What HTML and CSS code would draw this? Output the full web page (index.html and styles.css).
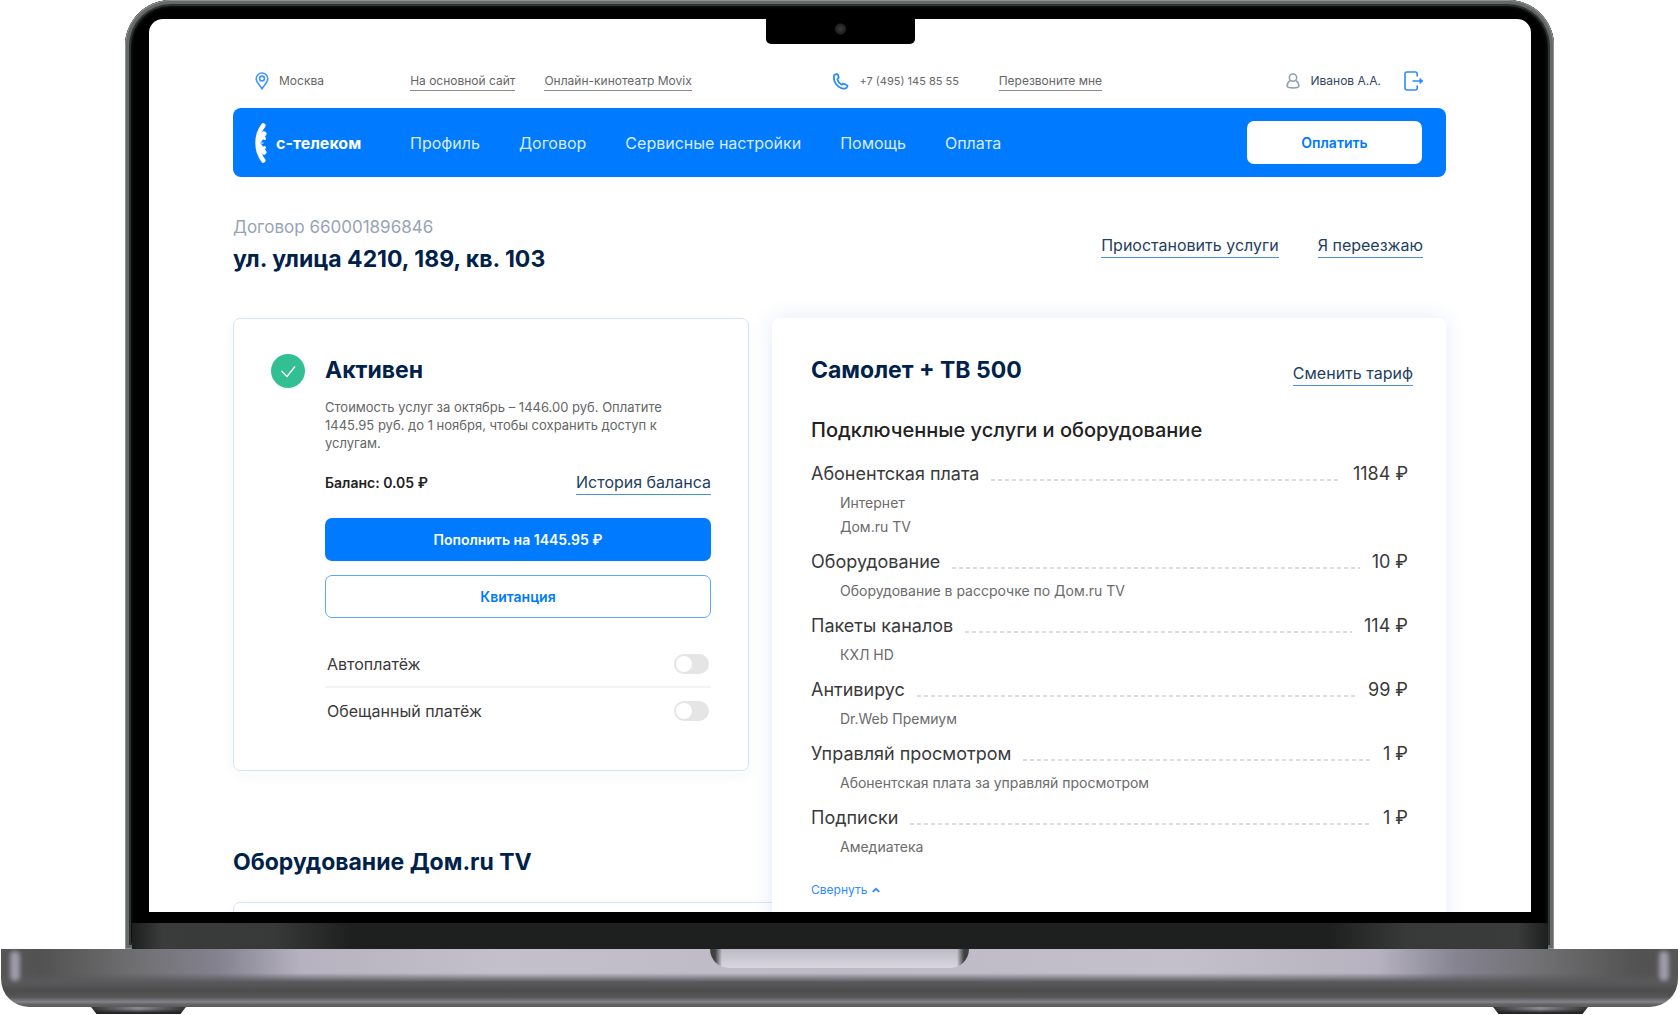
FILE: index.html
```html
<!DOCTYPE html>
<html lang="ru">
<head>
<meta charset="utf-8">
<meta name="viewport" content="width=device-width, initial-scale=1">
<title>С-Телеком — личный кабинет</title>
<link rel="stylesheet" href="styles.css">
</head>
<body>
<div class="laptop">
  <div class="lid">
    <div class="notch"></div>
    <div class="screen">
      <div class="container">
        <header>
          <div class="topbar">
            <div class="topbar-group city">
              <svg width="14" height="18" viewBox="0 0 14 18" fill="none" stroke="#3d96ff" stroke-width="1.6"><path d="M7 16.8C5 13.6 1.2 10.4 1.2 6.8a5.8 5.8 0 0 1 11.6 0C12.800 10.400 9 13.600 7 16.800Z"/><circle cx="7" cy="6.500" r="2.400"/></svg>
              <span>Москва</span>
            </div>
            <div class="topbar-group sites">
              <a class="link-small" href="#">На основной сайт</a>
              <a class="link-small" href="#">Онлайн-кинотеатр Movix</a>
            </div>
            <div class="topbar-group phone">
              <svg width="16" height="17" viewBox="0 0 16 17" fill="none" stroke="#2b8cff" stroke-width="1.800" stroke-linejoin="round"><path d="M1.800 1.600 3.800 1.100Q4.700 1 5 1.900L5.700 4.300Q5.800 5 5.200 5.500L4.300 6.300Q5.300 9.600 8.600 11.700L9.700 10.900Q10.400 10.500 11.100 10.900L13.900 12.200Q14.700 12.700 14.400 13.500 13.700 15.500 11.700 15.600 6.800 15.800 3.200 11.200 0 6.700 1.100 2.500 1.300 1.800 1.800 1.600Z"/></svg>
              <span>+7 (495) 145 85 55</span>
            </div>
            <div class="topbar-group"><a class="link-small" href="#">Перезвоните мне</a></div>
            <div class="topbar-group user">
              <svg width="14" height="16" viewBox="0 0 14 16" fill="none" stroke="#919eae" stroke-width="1.500"><circle cx="7" cy="4.600" r="3.700"/><path d="M4.300 7.300C2.300 8.500 1.200 10.400 1.100 13q0 1.900 5.900 1.900t5.900-1.900C12.800 10.400 11.700 8.500 9.700 7.300"/></svg>
              <span>Иванов А.А.</span>
              <a class="exit" href="#" aria-label="Выйти"><svg width="20" height="20" viewBox="0 0 20 20" fill="none" stroke="#2b8cff" stroke-width="1.600"><path d="M13.200 5.500V3q0-2-2-2H3Q1 1 1 3v14q0 2 2 2h8.200q2 0 2-2v-2.500M8.500 10H16"/><path d="M15.800 7.200 19.200 10l-3.400 2.800Z" fill="#2b8cff" stroke-width=".5"/></svg></a>
            </div>
          </div>
          <nav class="navbar">
            <a class="logo" href="#">
              <svg width="12" height="40" viewBox="0 0 12 40" fill="none" stroke="#fff" stroke-linecap="round"><path d="M8.300 2.500Q2.500 10 2.500 20t5.800 17.500" stroke-width="4.500"/><path d="M4.500 17 9 10.800M4.500 23 9 29.200" stroke-width="5"/><path d="M5 13l4.500 2.500M5 27l4.500-2.500" stroke-width="3"/><path d="M3 20h5" stroke-width="1.200"/></svg>
              <span>с-телеком</span>
            </a>
            <div class="menu">
              <a href="#">Профиль</a>
              <a href="#">Договор</a>
              <a href="#">Сервисные настройки</a>
              <a href="#">Помощь</a>
              <a href="#">Оплата</a>
            </div>
            <button class="btn btn-pay" type="button">Оплатить</button>
          </nav>
        </header>

        <div class="page-head">
          <div>
            <p class="contract">Договор 660001896846</p>
            <h1>ул. улица 4210, 189, кв. 103</h1>
          </div>
          <div class="page-links">
            <a class="link" href="#">Приостановить услуги</a>
            <a class="link" href="#">Я переезжаю</a>
          </div>
        </div>

        <main class="columns">
          <div class="column-left">
            <section class="card status">
              <svg class="status-icon" width="34" height="34" viewBox="0 0 34 34" fill="none"><circle cx="17" cy="17" r="17" fill="#32bf91"/><path d="m10.500 17 5.500 5.500 8-10" stroke="#fff" stroke-width="1.400"/></svg>
              <div class="status-body">
                <h2>Активен</h2>
                <p class="note">Стоимость услуг за октябрь – 1446.00 руб. Оплатите 1445.95 руб. до 1 ноября, чтобы сохранить доступ к услугам.</p>
                <div class="balance">
                  <strong>Баланс: 0.05 ₽</strong>
                  <a class="link" href="#">История баланса</a>
                </div>
                <div class="actions">
                  <button class="btn btn-primary" type="button">Пополнить на 1445.95 ₽</button>
                  <button class="btn btn-outline" type="button">Квитанция</button>
                </div>
                <div class="toggles">
                  <div class="toggle-row"><label for="auto">Автоплатёж</label><input class="toggle" type="checkbox" id="auto"></div>
                  <div class="toggle-row"><label for="promised">Обещанный платёж</label><input class="toggle" type="checkbox" id="promised"></div>
                </div>
              </div>
            </section>
            <section class="equipment">
              <h2>Оборудование Дом.ru TV</h2>
              <div class="card equipment-card"></div>
            </section>
          </div>

          <section class="tariff">
            <div class="tariff-head">
              <h2>Самолет + ТВ 500</h2>
              <a class="link" href="#">Сменить тариф</a>
            </div>
            <h3>Подключенные услуги и оборудование</h3>
            <ul class="services">
              <li>
                <div class="service"><span>Абонентская плата</span><i class="dots"></i><span>1184 ₽</span></div>
                <p>Интернет</p>
                <p>Дом.ru TV</p>
              </li>
              <li>
                <div class="service"><span>Оборудование</span><i class="dots"></i><span>10 ₽</span></div>
                <p>Оборудование в рассрочке по Дом.ru TV</p>
              </li>
              <li>
                <div class="service"><span>Пакеты каналов</span><i class="dots"></i><span>114 ₽</span></div>
                <p>КХЛ HD</p>
              </li>
              <li>
                <div class="service"><span>Антивирус</span><i class="dots"></i><span>99 ₽</span></div>
                <p>Dr.Web Премиум</p>
              </li>
              <li>
                <div class="service"><span>Управляй просмотром</span><i class="dots"></i><span>1 ₽</span></div>
                <p>Абонентская плата за управляй просмотром</p>
              </li>
              <li>
                <div class="service"><span>Подписки</span><i class="dots"></i><span>1 ₽</span></div>
                <p>Амедиатека</p>
              </li>
            </ul>
            <button class="collapse" type="button">Свернуть <svg width="8" height="6" viewBox="0 0 8 6" fill="none" stroke="#2b8cff" stroke-width="1.800"><path d="m.7 4.800 3.300-3 3.300 3"/></svg></button>
          </section>
        </main>
      </div>
    </div>
    <div class="hinge"></div>
  </div>
  <div class="base"><div class="groove"></div></div>
  <div class="feet"><span></span><span></span></div>
</div>
</body>
</html>
```
FILE: styles.css
```css
* { box-sizing: border-box; }

body {
  margin: 0;
  background: #fff;
  color: #3a3a3a;
  font-family: Inter, "Noto Sans", sans-serif;
  font-size: 16px;
}

h1, h2, h3, p, ul { margin: 0; padding: 0; }
a { color: inherit; text-decoration: none; }
button { font-family: inherit; cursor: pointer; }
svg { display: block; flex: none; }

/* Laptop frame */
.laptop {
  display: flex;
  flex-direction: column;
  height: 100vh;
  overflow: hidden;
}

.lid {
  position: relative;
  flex: 1;
  min-height: 0;
  display: flex;
  flex-direction: column;
  margin: 0 126px 0 125px;
  padding: 19px 23px 0 24px;
  background: #000;
  border-radius: 46px 46px 0 0;
  box-shadow: inset 0 0 0 1px #8f9391, inset 0 0 0 4px #66696a, inset 0 0 0 6px #303232, inset 0 0 3px 7px #161818;
}

.notch {
  position: absolute;
  z-index: 2;
  top: 12px;
  left: 50%;
  width: 149px;
  height: 32px;
  margin-left: -74px;
  border-radius: 0 0 5px 5px;
  background: radial-gradient(circle at 50% 17px, #3a3c3c 0, #242626 4px, #222 5px, #000 6px);
}

.screen {
  flex: 1;
  min-height: 0;
  overflow: hidden;
  background: #fff;
  border-radius: 14px 14px 0 0;
}

.hinge {
  flex: none;
  height: 26px;
  margin: 11px -17px 0;
  background: linear-gradient(90deg, #1d1f1e 0, #3a3c3b 30px, #383a39 140px, #1e201f 220px, #1e201f calc(100% - 220px), #383a39 calc(100% - 140px), #3a3c3b calc(100% - 30px), #1d1f1e 100%);
}

.base {
  position: relative;
  flex: none;
  display: flex;
  justify-content: center;
  height: 58px;
  margin: 0 2px 0 1px;
  border-radius: 0 0 28px 28px;
  background:
    linear-gradient(180deg, rgba(90, 90, 94, 0) 24px, #59595c 33px, #4d4d4d 42px, #555 48px, #85828c 53px, #666 55px, #5a5a5a 58px),
    linear-gradient(90deg, #555 0, #525252 40px, #6e6e70 130px, #858390 220px, #b6b2bf 300px, #c3c0cb 500px, #bdbac6 50%, #c3c0cb calc(100% - 500px), #b6b2bf calc(100% - 300px), #858390 calc(100% - 220px), #6e6e70 calc(100% - 130px), #525252 calc(100% - 40px), #555 100%);
}

.base::before,
.base::after {
  content: "";
  position: absolute;
  top: 2px;
  width: 10px;
  height: 30px;
  border-radius: 5px;
  background: #9e9aa8;
  filter: blur(2px);
}
.base::before { left: 9px; }
.base::after { right: 9px; }

.groove {
  width: 259px;
  height: 19px;
  border-radius: 0 0 22px 22px;
  background:
    linear-gradient(90deg, #3f4140 5px, rgba(80, 80, 84, 0) 12px, rgba(80, 80, 84, 0) calc(100% - 12px), #3f4140 calc(100% - 5px)),
    linear-gradient(180deg, #bcbac4, #d8d6df);
}

.feet {
  flex: none;
  display: flex;
  justify-content: space-between;
  height: 8px;
  padding: 0 92px 0 91px;
}
.feet span {
  width: 95px;
  height: 7px;
  clip-path: polygon(0 0, 100% 0, 94% 100%, 6% 100%);
  background:
    linear-gradient(180deg, rgba(30, 30, 30, 0) 2px, #222 6px),
    linear-gradient(90deg, #333, #8d8a96 50%, #333);
}

/* Page */
.container { padding: 38px 85px 0 84px; }

.topbar {
  display: grid;
  grid-template-columns: 155fr 423fr 165fr 200fr 225fr;
  align-items: center;
  height: 48px;
  margin-bottom: 3px;
  padding: 0 22px;
  font-size: 12px;
  line-height: 16px;
  color: #666;
  white-space: nowrap;
}
.topbar-group { display: flex; align-items: center; }
.city { gap: 10px; }
.sites { gap: 29px; }
.phone { gap: 10px; font-size: 11px; }
.user { justify-content: flex-end; color: #33475f; }
.user span { margin-left: 11px; }
.exit { margin-left: 23px; }

.link-small {
  padding: 1px 0;
  border-top: 1px solid transparent;
  border-bottom: 1px solid #8c8c8c;
}

.link {
  padding: 1px 0;
  border-top: 1px solid transparent;
  border-bottom: 1px solid #4b8fd6;
  color: #24405f;
  font-size: 16px;
  line-height: 22px;
  white-space: nowrap;
}

.navbar {
  display: flex;
  align-items: center;
  height: 69px;
  padding: 0 24px 0 22px;
  border-radius: 8px;
  background: #007aff;
  color: #fff;
}
.logo {
  display: flex;
  align-items: center;
  gap: 9px;
  width: 155px;
  font-size: 16px;
  font-weight: 700;
}
.menu {
  display: flex;
  gap: 39px;
  color: #d9ebff;
  white-space: nowrap;
}

.btn {
  display: block;
  height: 43px;
  border: 0;
  border-radius: 7px;
  font-size: 14px;
  font-weight: 600;
}
.btn-pay {
  width: 175px;
  margin-left: auto;
  background: #fff;
  color: #007aff;
}
.btn-primary { background: #007aff; color: #fff; }
.btn-outline {
  border: 1px solid #5aa8ff;
  background: #fff;
  color: #007aff;
}

.page-head {
  display: flex;
  align-items: center;
  justify-content: space-between;
  margin: 38px 0 39px;
  padding-right: 23px;
}
.contract {
  color: #98a4b3;
  font-size: 17px;
  line-height: 24px;
}
h1, h2 {
  color: #00224a;
  font-size: 23px;
  font-weight: 700;
  line-height: 32px;
}
h1 { line-height: 40px; }
.page-links { display: flex; gap: 39px; margin-bottom: 4px; }

.columns {
  display: grid;
  grid-template-columns: 516fr 674fr;
  gap: 23px;
}

.card {
  border: 1px solid #d7e4f2;
  border-radius: 7px;
  background: #fff;
  box-shadow: 0 4px 16px rgba(30, 50, 80, .04);
}
.status {
  display: flex;
  gap: 20px;
  padding: 35px 37px 36px;
}
.status-body { flex: 1; min-width: 0; }
.note {
  margin-top: 12px;
  color: #666;
  font-size: 13px;
  line-height: 18px;
}
.balance {
  display: flex;
  align-items: center;
  justify-content: space-between;
  margin-top: 17px;
}
.balance strong { color: #222; font-size: 14px; font-weight: 600; }
.actions {
  display: grid;
  gap: 14px;
  margin-top: 23px;
}
.toggles { margin-top: 24px; }
.toggle-row {
  display: flex;
  align-items: center;
  justify-content: space-between;
  height: 46px;
  padding: 0 2px;
}
.toggle-row:first-child { border-bottom: 2px solid #f3f3f4; }

.toggle {
  appearance: none;
  display: flex;
  width: 35px;
  height: 20px;
  margin: 0;
  padding: 2px;
  border-radius: 10px;
  background: #e5e5e5;
}
.toggle::before {
  content: "";
  width: 16px;
  height: 16px;
  border-radius: 50%;
  background: #fff;
}

.equipment { margin-top: 75px; }
.equipment-card {
  height: 200px;
  margin: 24px -60px 0 0;
}

.tariff {
  position: relative;
  padding: 36px 33px 36px 39px;
  border-radius: 7px;
  background: #fff;
  box-shadow: 0 0 20px rgba(50, 90, 190, .13);
}
.tariff-head {
  display: flex;
  align-items: flex-end;
  justify-content: space-between;
}
h3 {
  margin-top: 30px;
  color: #222;
  font-size: 20px;
  font-weight: 500;
  line-height: 28px;
}
.services {
  margin-top: 15px;
  padding-right: 5px;
  list-style: none;
}
.services li { margin-bottom: 8px; }
.service {
  display: flex;
  align-items: center;
  gap: 12px;
  margin-bottom: 2px;
  font-size: 18px;
  line-height: 30px;
}
.dots {
  flex: 1;
  height: 2px;
  margin-top: 12px;
  background: repeating-linear-gradient(90deg, #dadee4 0, #dadee4 4px, transparent 4px, transparent 7px);
}
.services p {
  padding-left: 29px;
  color: #6b6b6b;
  font-size: 14px;
  line-height: 24px;
}

.collapse {
  display: flex;
  align-items: center;
  gap: 5px;
  margin-top: 21px;
  padding: 0;
  border: 0;
  background: none;
  color: #2b8cff;
  font-size: 12px;
  line-height: 20px;
}
```
